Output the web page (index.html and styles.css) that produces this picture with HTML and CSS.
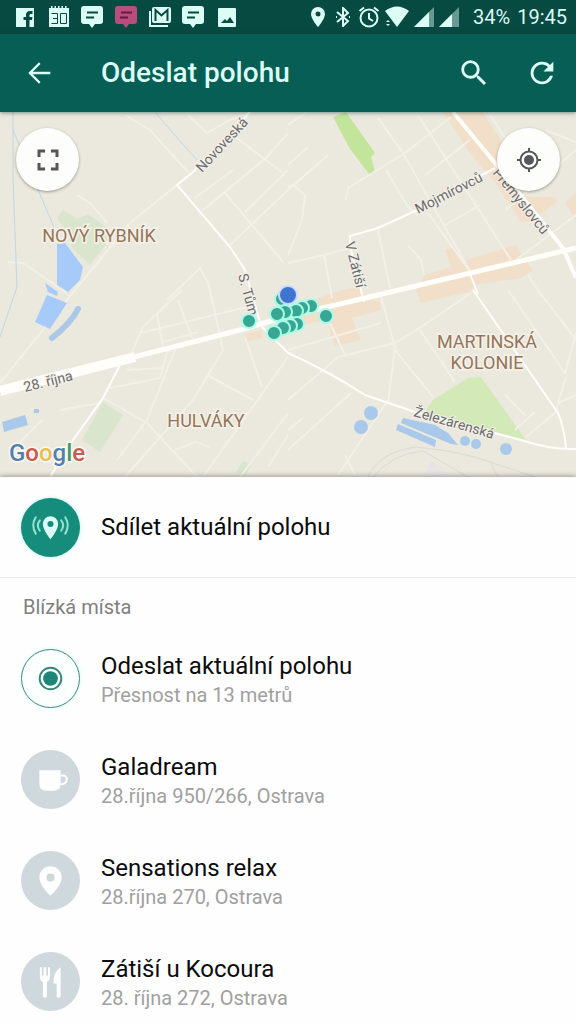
FILE: index.html
```html
<!DOCTYPE html>
<html lang="cs">
<head>
    <meta charset="UTF-8">
    <meta name="viewport" content="width=device-width, initial-scale=1.0">
    <title>Odeslat polohu</title>
    <link rel="stylesheet" href="styles.css">
</head>
<body>
    <div class="screen">

        <div class="status-bar">
            <div class="notifications">
                <svg class="icon" viewBox="0 0 22 22"><path fill-rule="evenodd" d="M2 2h18v19h-4.500v-7h2.500l.5-3h-3V9.500c0-1 .5-1.500 1.500-1.500H18.500V5H16c-2.500 0-4 1.500-4 4v2H9.500v3H12v7H2z"/></svg>
                <svg class="icon" viewBox="0 0 22 22"><path d="M1 2h2V0h1.500v2h2V0H8v2h2V0h1.500v2h2V0H15v2h2V0h1.500v2H21v19H1z"/><path class="cut" d="M3.500 7.500h6v10h-6M5 12.500h4.500M12.500 7.500h6v10h-6z"/></svg>
                <svg class="icon" viewBox="0 0 22 22"><path d="M3 0h16a3 3 0 0 1 3 3v12a3 3 0 0 1-3 3h-5l-3 4-3-4H3a3 3 0 0 1-3-3V3a3 3 0 0 1 3-3z"/><path class="cut thick" d="M6 6.500h11M5 11.500h8"/></svg>
                <svg class="icon pink" viewBox="0 0 22 22"><path d="M3 0h16a3 3 0 0 1 3 3v12a3 3 0 0 1-3 3h-5l-3 4-3-4H3a3 3 0 0 1-3-3V3a3 3 0 0 1 3-3z"/><path class="cut thick" d="M6 6.500h11M5 11.500h8"/></svg>
                <svg class="icon" viewBox="0 0 22 22"><path d="M0 5h2v14h17v2H0zM5 1h15q2 0 2 2v12q0 2-2 2H5q-2 0-2-2V3q0-2 2-2z"/><path class="cut thick" d="M6.500 15V4l6 5.500 6-5.500v11"/></svg>
                <svg class="icon" viewBox="0 0 22 22"><path d="M3 0h16a3 3 0 0 1 3 3v12a3 3 0 0 1-3 3h-5l-3 4-3-4H3a3 3 0 0 1-3-3V3a3 3 0 0 1 3-3z"/><path class="cut thick" d="M6 6.500h11M5 11.500h8"/></svg>
                <svg class="icon" viewBox="0 0 22 22"><path fill-rule="evenodd" d="M3 2h16q1 0 1 1v17q0 1-1 1H3q-1 0-1-1V3q0-1 1-1zM5 17h13l-4-6-3 4-2-2z"/></svg>
            </div>
            <div class="system">
                <svg class="icon small" viewBox="0 0 20 20"><path fill-rule="evenodd" d="M10 0a7 7 0 0 0-7 7c0 5 7 13 7 13s7-8 7-13a7 7 0 0 0-7-7zm0 4.500a2.500 2.500 0 1 1 0 5 2.500 2.500 0 0 1 0-5z"/></svg>
                <svg class="icon small" viewBox="0 0 20 20"><path class="line" d="M4 5l11 9-5 5V1l5 5-11 9M3 10h1M16 10h1"/></svg>
                <svg class="icon" viewBox="0 0 22 22"><circle class="line" cx="11" cy="12" r="8.500"/><path class="line" d="M11 7v5.500l4 2.500M1.500 5L6 1.500M20.500 5L16 1.500"/></svg>
                <svg class="icon wide" viewBox="0 0 24 22"><path d="M0 5Q12-4 24 5L12 21z"/><path d="M1 16l2-2 2 2zM1 18l2 2 2-2z"/></svg>
                <svg class="icon small" viewBox="0 0 20 20"><path d="M0 20L20 0v20z" opacity=".45"/><path d="M0 20L15 5v15z"/></svg>
                <svg class="icon small" viewBox="0 0 20 20"><path d="M0 20L20 0v20z" opacity=".45"/><path d="M0 20L13 7v13z"/></svg>
                <span class="battery">34%</span>
                <span class="clock">19:45</span>
            </div>
        </div>

        <header class="toolbar">
            <button class="tool" aria-label="Zpět"><svg viewBox="0 0 24 24"><path d="M20 11.200H7.600l5.500-5.600L12 4.400 4.400 12l7.600 7.600 1.100-1.200-5.500-5.600H20z"/></svg></button>
            <h1>Odeslat polohu</h1>
            <button class="tool" aria-label="Hledat"><svg viewBox="0 0 24 24"><path d="M15.500 14h-.79l-.28-.27A6.470 6.470 0 0 0 16 9.500 6.500 6.500 0 1 0 9.500 16c1.610 0 3.090-.59 4.230-1.570l.27.28v.79l5 4.990L20.490 19zm-6 0a4.500 4.500 0 1 1 0-9 4.500 4.500 0 0 1 0 9z"/></svg></button>
            <button class="tool" aria-label="Obnovit"><svg viewBox="0 0 24 24"><path d="M17.650 6.350A8 8 0 1 0 19.730 14h-2.080A6 6 0 1 1 12 6c1.660 0 3.140.69 4.220 1.780L13 11h7V4z"/></svg></button>
        </header>

        <div class="map">
            <svg class="map-canvas" viewBox="0 112 576 365">
                <g class="built">
                    <path d="M443 112h40l22 35-2 28 25 22h27l2 5-27 20h-9l-26-40-20-22zM565 203l11-11v28z"/>
                    <path d="M425 275l26-8-6-17 8-2 12 12 51-15 9 15 8 10-12 8-46 7-7 7-47 11-5-13z"/>
                    <path d="M300 305l35-13 25-6 6 12 14 4 1 8-29 8 9 22-27 6-6-26-28 5zM245 334l17-4v8l-16 4z"/>
                </g>
                <g class="park">
                    <path d="M57 218l6-8 15 9 10-5 19 14v15l-17 22-18-17-4-15zM103 402l20 13-23 37-18-12zM243 461l8 4-5 10-10-3z"/>
                    <path class="bright" d="M333 117l13-5 29 41-4 4 4 15-5 3-20-26z"/>
                    <path class="meadow" d="M425 412l8-12 35-22 13-1 45 63-36-8z"/>
                </g>
                <g class="streets">
                    <path d="M125 115l25 15 38 42M177 185l-47 38-63 77-67 83M195 198l38-28M203 210l64-53 21-24M230 245l58-55 40-35M225 193l58 69M245 212l43-42M233 135l50 38M188 115l19 18 23-13 20-8M167 300l33-32 8 15 4 17M8 262l15 1 44 30M77 195l13 8 17 20"/>
                    <path d="M378 118l25 35 68 120M386 170l22 37 10 8M418 115l93 145M451 117l-46 36-57 35-2 12M428 213l43 60M288 125l20-14M288 165l20-18M288 187l5-2 12 10-3 25-14 35M288 263l36-8 30-8M324 255l8 43M378 230l12 58M408 245l13 15 3 15M425 175l45-35M445 225l35-20M490 115l40 60M545 130l31 12M576 150l-70 60M576 215l-60 45"/>
                    <path d="M381 297l14 50-7 56M395 350l38 47M420 330l35 52M471 293l-50 34-26 16-57 14M508 290l57 83 11-40M538 290l38 50M566 377l-11 36-29 24M288 350l93-27M338 357l-50 43M351 393l-63 57M388 400l-50 75M505 395l20 20M515 430l20-18M576 395l-18 8M528 275l14 22M288 430l15-12M345 455l10 20M330 323l16 34"/>
                    <path d="M182 290l-39 37-13 30M103 398l44 25 50 54M140 333l107-26M157 313l6 34M178 300l15 40M210 290l13 60-30 50-68 77M175 350l-28 70-30 40M245 337l17 50M288 357l-85 120M207 375l46 25M288 413l-48 64M127 370l36-2M110 388l50-10 8-30M60 410l40-7M15 447l28-28M175 450l20-8 15 5M163 342l35-10M288 435l-20 32"/>
                </g>
                <g class="water">
                    <path class="stream" d="M13 112v68l4 107-17 50M13 130l40 95 4 15M155 112l18 21 24 27"/>
                    <path d="M57 244l8-1 18 24-3 13-12 12-11-7zM45 283l13 9-1 4-9-4zM47 295l20 8-17 26-15-7z"/>
                    <path class="canal" d="M78 309q-7 14-26 29"/>
                    <g class="dull">
                        <path d="M2 422l23-7 3 10-24 7zM34 409h5v4h-5zM403 418l32 7 13 8 10 12-7-1-50-21zM398 424l38 16-1 7-39-17z"/>
                        <circle cx="371" cy="413" r="7"/>
                        <circle cx="361" cy="427" r="7"/>
                        <circle cx="465" cy="441" r="5"/>
                        <circle cx="476" cy="444" r="5"/>
                        <circle cx="506" cy="449" r="6"/>
                    </g>
                </g>
                <path class="rail" d="M368 477q10-24 47-30 30 2 60 10l60 20M373 477q20-24 50-26l45 26M490 462l8 15"/>
                <path class="yard" d="M423 477l8-17 20 17z"/>
                <g class="roads">
                    <path d="M250 112l-57 60-16 13 53 62 15 23 13 46 4 11 26 26q40 18 77 42l50 17 106 28q30 10 55 9M495 168l-82 44-35 16-28 8 0 10 14 56M473 290l85 123q6 14 8 35M120 365l-17 33-30 42-23 37M470 274l8 20"/>
                    <path class="avenue" d="M453 112l42 51 68 85 13 30"/>
                    <path class="main" d="M130 358l110-28 48-14 52-12 236-56"/>
                    <path class="main wide" d="M0 391l135-34"/>
                </g>

                <g class="road-name">
                    <text transform="translate(202 173) rotate(-47)">Novoveská</text>
                    <text transform="translate(418 214) rotate(-27)">Mojmírovců</text>
                    <text transform="translate(345 243) rotate(76)">V Zátiší</text>
                    <text transform="translate(492 173) rotate(51)">Přemyslovců</text>
                    <text transform="translate(25 392) rotate(-14)">28. října</text>
                    <text transform="translate(413 416) rotate(16)">Železárenská</text>
                    <text transform="translate(238 275) rotate(75)">S. Tům</text>
                </g>
                <g class="district">
                    <text x="99" y="242">NOVÝ RYBNÍK</text>
                    <text x="206" y="427">HULVÁKY</text>
                    <text x="487" y="348">MARTINSKÁ</text>
                    <text x="487" y="369">KOLONIE</text>
                </g>

                <g class="places">
                    <circle cx="282" cy="299" r="7"/>
                    <circle cx="311" cy="306" r="7"/>
                    <circle cx="302" cy="308" r="7"/>
                    <circle cx="296" cy="311" r="7"/>
                    <circle cx="285" cy="312" r="7"/>
                    <circle cx="277" cy="314" r="7"/>
                    <circle cx="297" cy="324" r="7"/>
                    <circle cx="290" cy="326" r="7"/>
                    <circle cx="283" cy="328" r="7"/>
                    <circle cx="274" cy="333" r="7"/>
                    <circle cx="326" cy="316" r="7"/>
                    <circle cx="249" cy="321" r="7"/>
                    <circle class="me" cx="288" cy="295" r="9"/>
                </g>
                <text class="google" x="9" y="461"><tspan class="g-blue">G</tspan><tspan class="g-red">o</tspan><tspan class="g-yellow">o</tspan><tspan class="g-blue">g</tspan><tspan class="g-green">l</tspan><tspan class="g-red">e</tspan></text>
            </svg>
            <button class="map-button expand" aria-label="Celá obrazovka"><svg viewBox="0 0 24 24"><path d="M7 14H5v5h5v-2H7zM5 10h2V7h3V5H5zM17 17h-3v2h5v-5h-2zM14 5v2h3v3h2V5z"/></svg></button>
            <button class="map-button locate" aria-label="Moje poloha"><svg viewBox="0 0 36 36"><circle cx="18" cy="18" r="5"/><circle class="ring" cx="18" cy="18" r="8.500"/><path class="ring" d="M18 6v4M18 26v4M6 18h4M26 18h4"/></svg></button>
        </div>

        <button class="row share">
            <span class="badge teal">
                <svg viewBox="0 0 58 58"><path fill-rule="evenodd" d="M29 18a7.500 7.500 0 0 0-7.500 7.500c0 6 7.500 15 7.500 15s7.500-9 7.500-15A7.500 7.500 0 0 0 29 18zm0 4.500a3 3 0 1 1 0 6 3 3 0 0 1 0-6z"/><path class="waves" d="M18.500 22q-4 5 0 10M14.500 19q-5 8 0 16M39.500 22q4 5 0 10M43.500 19q5 8 0 16"/></svg>
            </span>
            <span class="name">Sdílet aktuální polohu</span>
        </button>

        <section class="nearby">
            <h2>Blízká místa</h2>
            <ul>
                <li>
                    <button class="row">
                        <span class="badge outline">
                            <svg viewBox="0 0 58 58"><circle cx="29" cy="29" r="7.500"/><circle class="ring" cx="29" cy="29" r="11"/></svg>
                        </span>
                        <span class="text">
                            <span class="name">Odeslat aktuální polohu</span>
                            <span class="address">Přesnost na 13 metrů</span>
                        </span>
                    </button>
                </li>
                <li>
                    <button class="row">
                        <span class="badge">
                            <svg viewBox="0 0 58 58"><path d="M18 20h21v13q0 7-7 7h-7q-7 0-7-7z"/><path class="handle" d="M39 25h2q4 0 4 4t-6 5"/></svg>
                        </span>
                        <span class="text">
                            <span class="name">Galadream</span>
                            <span class="address">28.října 950/266, Ostrava</span>
                        </span>
                    </button>
                </li>
                <li>
                    <button class="row">
                        <span class="badge">
                            <svg viewBox="0 0 58 58"><path fill-rule="evenodd" d="M29 15a11 11 0 0 0-11 11c0 8 11 18 11 18s11-10 11-18a11 11 0 0 0-11-11zm0 7a4 4 0 1 1 0 8 4 4 0 0 1 0-8z"/></svg>
                        </span>
                        <span class="text">
                            <span class="name">Sensations relax</span>
                            <span class="address">28.října 270, Ostrava</span>
                        </span>
                    </button>
                </li>
                <li>
                    <button class="row">
                        <span class="badge">
                            <svg viewBox="0 0 58 58"><path d="M18.500 15h2v8h1.700v-8h2.600v8h1.700v-8h2v9q0 4-3 5.500V43q0 2-2 2t-2-2V29.500q-3-1.500-3-5.500zM39 15v28q0 2-2 2t-2-2V31h-3q-1-11 7-16z"/></svg>
                        </span>
                        <span class="text">
                            <span class="name">Zátiší u Kocoura</span>
                            <span class="address">28. října 272, Ostrava</span>
                        </span>
                    </button>
                </li>
            </ul>
        </section>

    </div>
</body>
</html>
```

FILE: styles.css
```css
* {
    box-sizing: border-box;
}
body {
    margin: 0;
    font-family: Roboto, sans-serif;
    background-color: #fefefe;
    color: #0c0c0c;
}
button {
    padding: 0;
    border: none;
    background: none;
    font: inherit;
    color: inherit;
    text-align: left;
    cursor: pointer;
}
svg {
    display: block;
}
.screen {
    display: flex;
    flex-direction: column;
    height: 100vh;
    overflow: hidden;
}

/* Status bar */
.status-bar {
    flex: none;
    display: flex;
    align-items: center;
    justify-content: space-between;
    height: 34px;
    padding: 0 9px 0 14px;
    background-color: #064a41;
    color: #dcf8f3;
    font-size: 20px;
}
.notifications {
    display: flex;
    justify-content: space-between;
    width: 224px;
}
.system {
    display: flex;
    align-items: center;
    gap: 5px;
}
.icon {
    width: 22px;
    height: 22px;
    fill: #dcfcf6;
}
.icon.small {
    width: 20px;
    height: 20px;
}
.icon.wide {
    width: 24px;
}
.icon.pink {
    fill: #b94e7c;
}
.icon .cut {
    fill: none;
    stroke: #064a41;
    stroke-width: 1;
}
.icon .thick {
    stroke-width: 2;
}
.icon.pink .cut {
    stroke: #6c1745;
}
.icon .line {
    fill: none;
    stroke: #dcfcf6;
    stroke-width: 2;
}
.battery {
    margin-left: 9px;
}
.clock {
    margin-left: 2px;
}

/* Toolbar */
.toolbar {
    flex: none;
    position: relative;
    z-index: 1;
    display: flex;
    align-items: center;
    gap: 24px;
    height: 78px;
    padding: 0 12px 0 17px;
    background-color: #075e54;
    color: #dcfcf6;
    box-shadow: 0 1px 4px rgba(0, 60, 50, 0.5);
}
.toolbar h1 {
    flex: 1;
    margin: 0;
    padding-left: 16px;
    font-size: 28px;
    font-weight: 500;
    line-height: 32px;
}
.tool {
    display: flex;
    align-items: center;
    justify-content: center;
    width: 44px;
    height: 44px;
}
.tool svg {
    width: 34px;
    height: 34px;
    fill: #dcfcf6;
}

/* Map */
.map {
    flex: none;
    position: relative;
    background-color: #ebe8de;
}
.map-canvas {
    width: 100%;
    height: auto;
}
.built {
    fill: #f2dfc9;
}
.park {
    fill: #d9e6cd;
}
.park .bright {
    fill: #c3e59b;
}
.park .meadow {
    fill: #d3e9b7;
}
.streets {
    fill: none;
    stroke: #f2f0e7;
    stroke-width: 2;
}
.roads {
    fill: none;
    stroke: #fffefa;
    stroke-width: 2;
}
.roads .avenue {
    stroke-width: 4;
}
.roads .main {
    stroke-width: 5;
}
.roads .wide {
    stroke-width: 10;
}
.water {
    fill: #a6cbf8;
}
.water .stream {
    fill: none;
    stroke: #bfd7e6;
    stroke-width: 1;
}
.water .canal {
    fill: none;
    stroke: #aac8e8;
    stroke-width: 6;
    stroke-linecap: round;
}
.water .dull {
    fill: #a9c9ea;
}
.rail {
    fill: none;
    stroke: #dbd9d3;
    stroke-width: 1;
}
.yard {
    fill: #e8e4e6;
}
.road-name {
    font-size: 14px;
    fill: #6b6b6e;
    stroke: #f3f1e8;
    stroke-width: 2;
    paint-order: stroke;
}
.district {
    font-size: 18px;
    text-anchor: middle;
    fill: #957559;
    stroke: #f5f2e9;
    stroke-width: 3;
    paint-order: stroke;
}
.places {
    fill: #37a692;
    stroke: #a9fbe8;
    stroke-width: 2;
}
.places .me {
    fill: #3f74d1;
    stroke: #cbdcff;
}
.google {
    font-size: 24px;
    font-weight: 500;
    stroke: #fbf9f2;
    stroke-width: 3;
    paint-order: stroke;
}
.g-blue {
    fill: #5280ac;
}
.g-red {
    fill: #ca5a50;
}
.g-yellow {
    fill: #e6bd50;
}
.g-green {
    fill: #4f9668;
}
.map-button {
    position: absolute;
    top: 16px;
    display: flex;
    align-items: center;
    justify-content: center;
    width: 63px;
    height: 63px;
    border-radius: 50%;
    background-color: #fdfdfb;
    box-shadow: 0 1px 3px rgba(0, 0, 0, 0.35);
}
.map-button svg {
    width: 36px;
    height: 36px;
    fill: #54585b;
}
.map-button .ring {
    fill: none;
    stroke: #54585b;
    stroke-width: 2;
}
.expand {
    left: 16px;
}
.locate {
    right: 16px;
}

/* Rows */
.row {
    display: flex;
    align-items: center;
    gap: 21px;
    width: 100%;
    height: 101px;
    padding: 0 21px;
}
.share {
    flex: none;
    position: relative;
    background-color: #fefefe;
    border-bottom: 1px solid #e8e8e8;
    box-shadow: 0 -1px 5px rgba(0, 0, 0, 0.35);
}
.badge {
    flex: none;
    width: 59px;
    height: 59px;
    border-radius: 50%;
    background-color: #cfd8dc;
}
.badge svg {
    width: 100%;
    height: 100%;
    fill: #fefefe;
}
.badge .handle {
    fill: none;
    stroke: #fefefe;
    stroke-width: 2;
}
.badge.teal {
    background-color: #168c7c;
    box-shadow: 0 0 4px #b8f5ea;
}
.teal svg {
    fill: #dcfcf6;
}
.teal .waves {
    fill: none;
    stroke: #93e3d0;
    stroke-width: 2;
    stroke-linecap: round;
}
.badge.outline {
    border: 1px solid #3f8880;
    background-color: #fbfffe;
    box-shadow: 0 0 4px #d5fbf5;
}
.outline svg {
    fill: #1d8678;
}
.outline .ring {
    fill: none;
    stroke: #38877d;
    stroke-width: 2;
}
.text {
    display: flex;
    flex-direction: column;
}
.name {
    font-size: 24px;
    line-height: 32px;
}
.address {
    font-size: 20px;
    line-height: 26px;
    color: #a0a0a0;
}

/* Nearby places */
.nearby {
    flex: 1;
    position: relative;
    min-height: 0;
    overflow-y: auto;
    scrollbar-width: none;
    background-color: #fefefe;
}
.nearby h2 {
    margin: 0;
    padding: 17px 23px 9px;
    font-size: 20px;
    font-weight: 400;
    line-height: 24px;
    color: #808080;
}
.nearby ul {
    margin: 0;
    padding: 0;
    list-style: none;
}
```
